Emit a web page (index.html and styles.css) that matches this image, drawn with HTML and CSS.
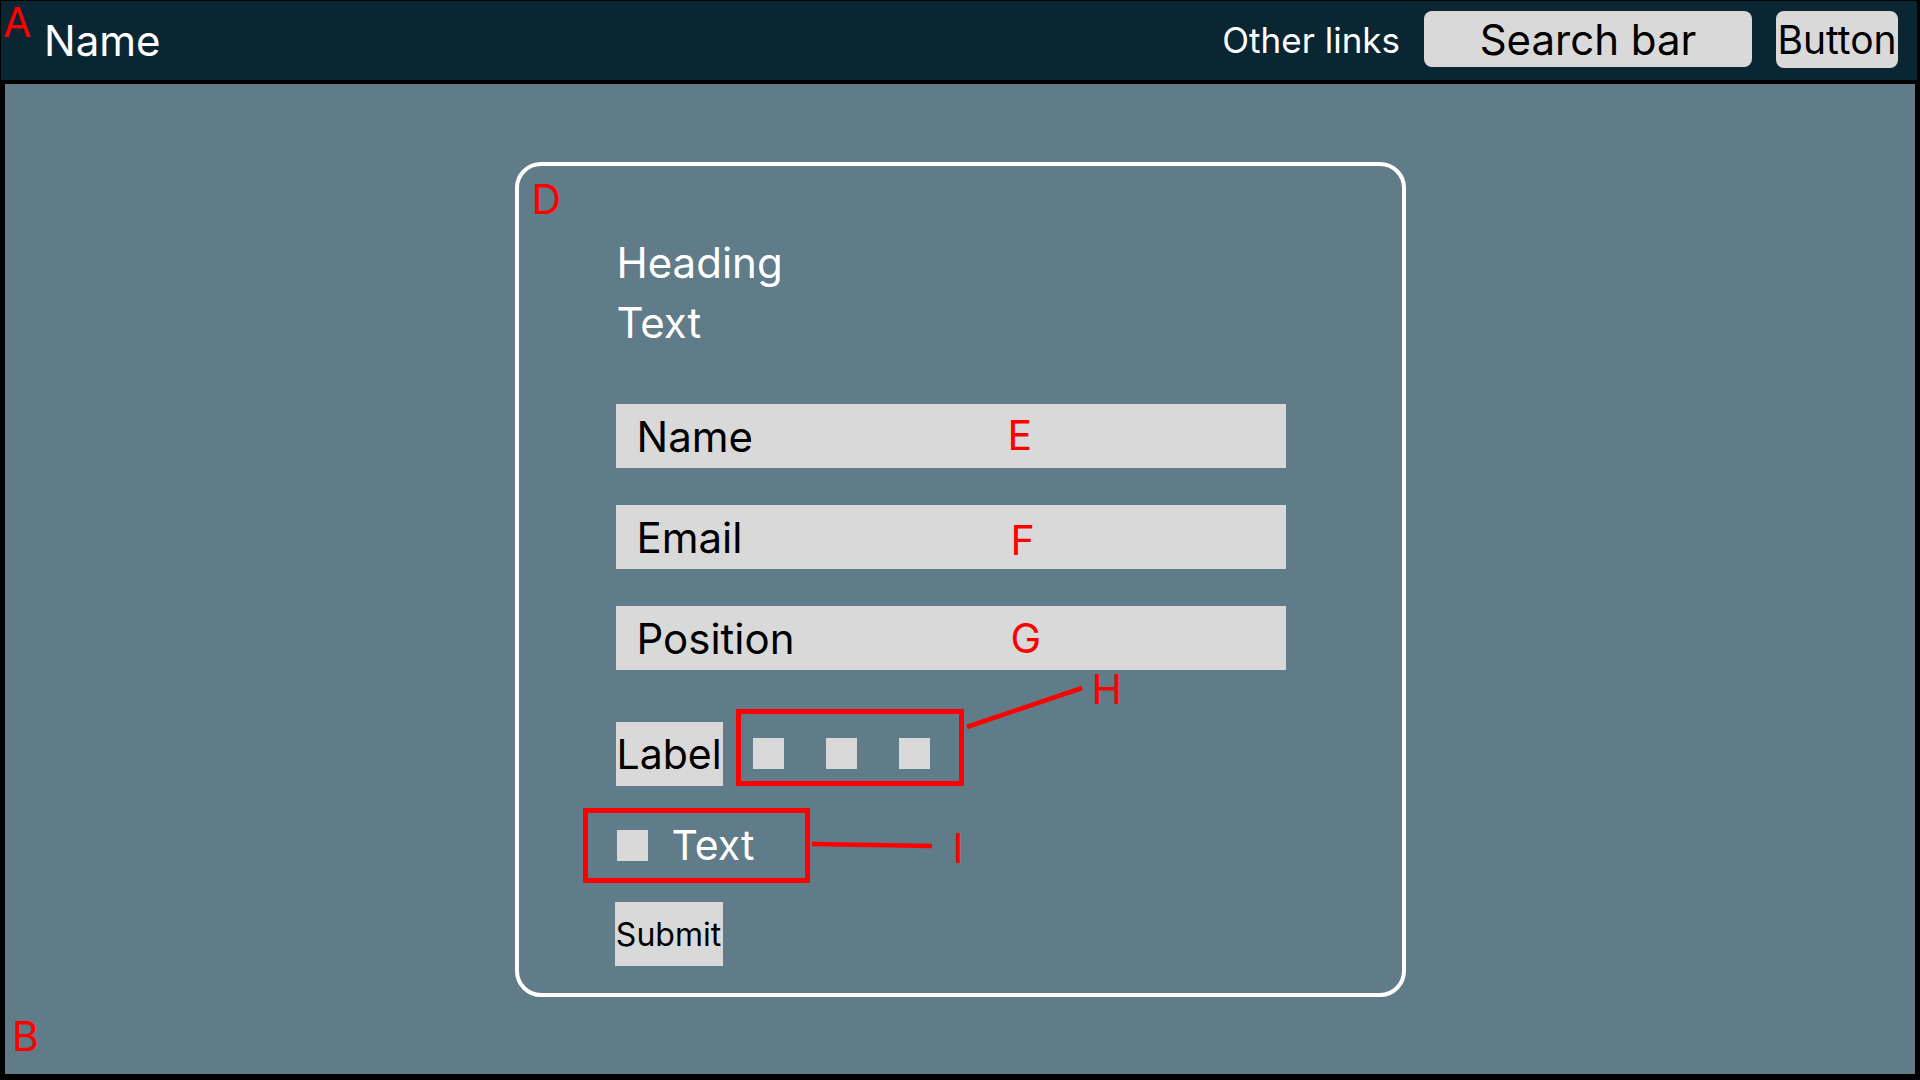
FILE: index.html
```html
<!DOCTYPE html>
<html lang="en">
<head>
<meta charset="utf-8">
<title>Wireframe</title>
<link rel="stylesheet" href="styles.css">
</head>
<body>
<div class="page">
  <header class="topbar">
    <span class="note note-a">A</span>
    <div class="brand">Name</div>
    <nav class="nav">
      <a class="nav-link">Other links</a>
      <div class="search">Search bar</div>
      <div class="top-button">Button</div>
    </nav>
  </header>
  <main class="main">
    <span class="note note-b">B</span>
    <form class="card">
      <span class="note note-d">D</span>
      <div class="intro">
        <div class="intro-line">Heading</div>
        <div class="intro-line">Text</div>
      </div>
      <div class="field field-first">Name<span class="note note-e">E</span></div>
      <div class="field">Email<span class="note note-f">F</span></div>
      <div class="field">Position<span class="note note-g">G</span></div>
      <div class="label-row">
        <div class="label-box">Label</div>
        <div class="options">
          <span class="square"></span>
          <span class="square"></span>
          <span class="square"></span>
        </div>
      </div>
      <div class="check">
        <span class="square"></span>
        <span class="check-text">Text</span>
      </div>
      <div class="submit">Submit</div>
      <span class="note note-h">H</span>
      <span class="note note-i">I</span>
      <svg class="leaders" width="891" height="835" viewBox="0 0 891 835">
        <line x1="452" y1="565" x2="567" y2="526" stroke="#ff0000" stroke-width="4.5"/>
        <line x1="297" y1="682" x2="417" y2="684" stroke="#ff0000" stroke-width="4.5"/>
      </svg>
    </form>
  </main>
</div>
</body>
</html>
```
FILE: styles.css
```css
* {
  box-sizing: border-box;
}

html, body {
  margin: 0;
  padding: 0;
  background: #000000;
}

body {
  width: 1920px;
  height: 1080px;
  overflow: hidden;
  font-family: "Inter", "Noto Sans", sans-serif;
}

.page {
  display: flex;
  flex-direction: column;
  width: 1920px;
  height: 1080px;
}

.topbar {
  position: relative;
  display: flex;
  align-items: center;
  justify-content: space-between;
  margin: 1px 3px 0 1px;
  height: 79px;
  padding: 0 19px 0 43px;
  background: #0b2633;
  color: #ffffff;
}

.brand {
  font-size: 42px;
}

.nav {
  display: flex;
  align-items: center;
  gap: 24px;
}

.nav-link {
  font-size: 35px;
  color: #ffffff;
  margin-top: -2px;
}

.search {
  width: 328px;
  height: 56px;
  border-radius: 8px;
  background: #d9d9d9;
  color: #000000;
  font-size: 42px;
  display: flex;
  align-items: center;
  justify-content: center;
  margin-top: -3px;
}

.top-button {
  width: 122px;
  height: 57px;
  border-radius: 8px;
  background: #d9d9d9;
  color: #000000;
  font-size: 39px;
  display: flex;
  align-items: center;
  justify-content: center;
  margin-top: -2px;
}

.main {
  position: relative;
  display: flex;
  justify-content: center;
  align-items: flex-start;
  margin: 4px 5px 5px 5px;
  height: 990px;
  padding-top: 78px;
  background: #5f7c88;
}

.card {
  position: relative;
  display: flex;
  flex-direction: column;
  align-items: flex-start;
  width: 891px;
  margin: 0;
  padding: 67px 115px 27px 97px;
  border: 4px solid #ffffff;
  border-radius: 26px;
}

.intro {
  color: #ffffff;
  font-size: 42px;
  line-height: 60px;
  padding-left: 1px;
}

.field {
  position: relative;
  width: 670px;
  height: 64px;
  margin-top: 37px;
  padding-left: 21px;
  display: flex;
  align-items: center;
  background: #d9d9d9;
  color: #000000;
  font-size: 42px;
}

.field-first {
  margin-top: 51px;
}

.label-row {
  display: flex;
  align-items: flex-end;
  gap: 13px;
  margin-top: 39px;
}

.label-box {
  height: 64px;
  padding: 0 1px;
  display: flex;
  align-items: center;
  background: #d9d9d9;
  color: #000000;
  font-size: 41px;
}

.options {
  display: flex;
  gap: 42px;
  padding: 24px 29px 12px 12px;
  border: 5px solid #ff0000;
}

.square {
  display: block;
  width: 31px;
  height: 31px;
  background: #d9d9d9;
}

.check {
  display: flex;
  align-items: center;
  gap: 24px;
  margin-top: 22px;
  margin-left: -33px;
  padding: 17px 51px 17px 29px;
  border: 5px solid #ff0000;
}

.check-text {
  color: #ffffff;
  font-size: 41px;
  line-height: 31px;
}

.submit {
  width: 108px;
  height: 64px;
  margin-top: 19px;
  margin-left: -1px;
  display: flex;
  align-items: center;
  justify-content: center;
  background: #d9d9d9;
  color: #000000;
  font-size: 32px;
}

.note {
  position: absolute;
  color: #ff0000;
  font-size: 41px;
  line-height: 41px;
  font-family: "Inter", "Noto Sans", sans-serif;
}

.note-a { left: 2px; top: 1px; }
.note-b { left: 7px; top: 932px; }
.note-d { left: 13px; top: 13px; }
.note-e { left: 392px; top: 11px; }
.note-f { left: 395px; top: 15px; }
.note-g { left: 395px; top: 12px; }
.note-h { left: 573px; top: 503px; }
.note-i { left: 434px; top: 662px; }

.leaders {
  position: absolute;
  left: -4px;
  top: -4px;
  pointer-events: none;
}
```
